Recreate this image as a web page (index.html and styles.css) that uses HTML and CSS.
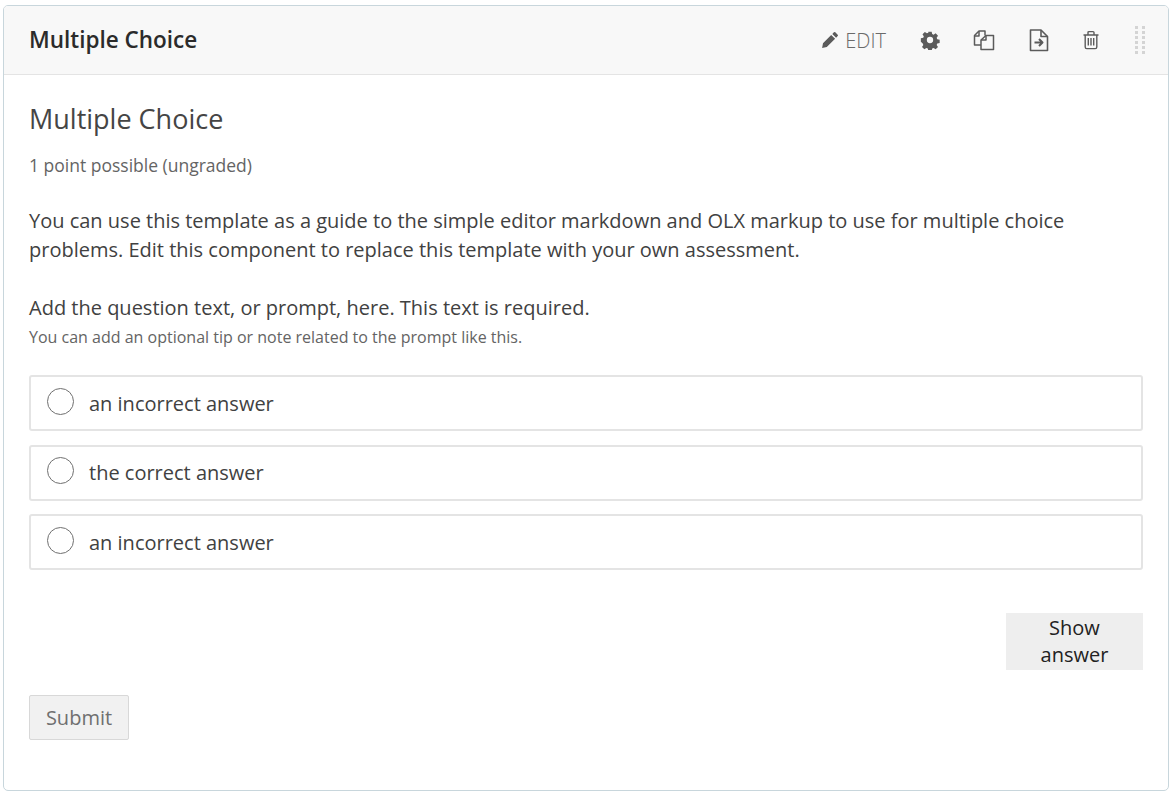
FILE: index.html
```html
<!DOCTYPE html>
<html lang="en">
<head>
<meta charset="utf-8">
<title>Multiple Choice</title>
<link rel="stylesheet" href="styles.css">
</head>
<body>
<div class="card">
  <header class="head">
    <h2 class="head-title">Multiple Choice</h2>
    <div class="actions">
      <span class="edit">
        <svg class="i-pencil" viewBox="0 0 18 18" width="18" height="18"><path d="M12.900 1.300a1 1 0 0 1 1.400 0l2.400 2.400a1 1 0 0 1 0 1.400l-1.600 1.600-3.800-3.800z M10.200 3.900l3.900 3.900-8.300 8.300-4.700 1 .9-4.900z" fill="#5b5b5b"/></svg>
        <span>EDIT</span>
      </span>
      <svg class="i-gear" viewBox="0 0 24 24" width="20" height="20"><path fill="#5b5b5b" fill-rule="evenodd" d="M10 2h4l.6 2.900 1.700.7 2.500-1.600 2.800 2.800-1.600 2.500.7 1.700 2.900.6v4l-2.900.6-.7 1.700 1.600 2.500-2.800 2.800-2.500-1.600-1.700.7-.6 2.900h-4l-.6-2.900-1.700-.7-2.500 1.600-2.800-2.800 1.600-2.500-.7-1.700L1 14v-4l2.900-.6.7-1.700L3 5.200l2.800-2.800 2.500 1.600 1.700-.7zM12 8.200a3.800 3.800 0 1 0 0 7.600 3.800 3.800 0 0 0 0-7.600z"/></svg>
      <svg class="i-copy" viewBox="0 0 22 22" width="22" height="22"><g fill="none" stroke="#5b5b5b" stroke-width="1.500" stroke-linejoin="round"><path d="M8 16H1.500V6.500L6 2h6v4.500"/><path d="M1.500 7H6V2"/><path d="M8 11l5-4.500h7.500V20.500H8z"/><path d="M8 11h5V6.500"/></g></svg>
      <svg class="i-move" viewBox="0 0 20 24" width="20" height="24"><g fill="none" stroke="#5b5b5b" stroke-width="1.600" stroke-linejoin="round"><path d="M1.500 2H12l6.500 6.500V22.500H1.500z"/><path d="M12 2v6.500h6.500"/><path d="M5.500 14.500H13M10 11l3.500 3.500-3.500 3.500" stroke-width="2"/></g></svg>
      <svg class="i-trash" viewBox="0 0 18 20" width="18" height="20"><g fill="none" stroke="#5b5b5b" stroke-width="1.400"><path d="M1.500 5h15"/><path d="M6 5V2.600q0-1 1-1h4q1 0 1 1V5"/><path d="M3.200 5v12q0 1.600 1.600 1.600h8.400q1.600 0 1.600-1.600V5"/><path d="M6.300 8v7.500M9 8v7.500M11.700 8v7.500"/></g></svg>
      <svg class="i-drag" viewBox="0 0 10 30" width="10" height="30"><g fill="#d4d4d4"><rect x="0" y="1" width="3" height="3"/><rect x="7" y="1" width="3" height="3"/><rect x="0" y="6" width="3" height="3"/><rect x="7" y="6" width="3" height="3"/><rect x="0" y="11" width="3" height="3"/><rect x="7" y="11" width="3" height="3"/><rect x="0" y="16" width="3" height="3"/><rect x="7" y="16" width="3" height="3"/><rect x="0" y="21" width="3" height="3"/><rect x="7" y="21" width="3" height="3"/><rect x="0" y="26" width="3" height="3"/><rect x="7" y="26" width="3" height="3"/></g></svg>
    </div>
  </header>
  <main class="body">
    <h3 class="problem-title">Multiple Choice</h3>
    <p class="points">1 point possible (ungraded)</p>
    <p class="intro">You can use this template as a guide to the simple editor markdown and OLX markup to use for multiple choice problems. Edit this component to replace this template with your own assessment.</p>
    <p class="prompt">Add the question text, or prompt, here. This text is required.</p>
    <p class="tip">You can add an optional tip or note related to the prompt like this.</p>
    <div class="options">
      <label class="option"><span class="radio"></span><span>an incorrect answer</span></label>
      <label class="option"><span class="radio"></span><span>the correct answer</span></label>
      <label class="option"><span class="radio"></span><span>an incorrect answer</span></label>
    </div>
    <div class="show-row"><button class="show">Show answer</button></div>
    <button class="submit">Submit</button>
  </main>
</div>
</body>
</html>
```
FILE: styles.css
```css
* { box-sizing: border-box; }
html, body { margin: 0; background: #fff; }
body { padding: 5px 5px 4px 3px; font-family: "Open Sans", sans-serif; color: #414141; }
.card { height: 786px; border: 1px solid #c8d6dc; border-radius: 5px; overflow: hidden; background: #fff; }
.head { height: 69px; display: flex; align-items: center; justify-content: space-between; padding: 0 23px 0 25px; background: #f8f8f8; border-bottom: 1px solid #e4e4e4; }
.head-title { margin: 0 0 2px; font-size: 22.5px; font-weight: 600; color: #2b2b2b; }
.actions { display: flex; align-items: center; }
.edit { display: flex; align-items: center; gap: 6px; font-size: 20px; font-weight: 300; color: #6a6a6a; margin-right: 34px; }
.i-gear { margin-left: 0; }
.i-copy { margin-left: 33px; }
.i-move { margin-left: 34px; }
.i-trash { margin-left: 33px; }
.i-drag { margin-left: 35px; }
.body { padding: 24px 25px 0 25px; }
.problem-title { margin: 0; font-size: 27px; line-height: 40px; font-weight: 400; color: #454545; }
.points { margin: 14px 0 0; font-size: 17.5px; line-height: 24px; color: #646464; }
.intro { margin: 29px 0 0; font-size: 20px; line-height: 29px; color: #414141; }
.prompt { margin: 29px 0 0; font-size: 20px; line-height: 29px; }
.tip { margin: 3px 0 0; font-size: 16px; line-height: 24px; color: #646464; }
.options { margin-top: 26px; display: flex; flex-direction: column; gap: 13.5px; }
.option { height: 56px; display: flex; align-items: center; gap: 15px; padding: 0 16px; border: 2px solid #e4e4e4; border-radius: 3px; font-size: 20px; }
.radio { width: 27px; height: 27px; border: 1px solid #707070; border-radius: 50%; margin-top: -4px; }
.show-row { display: flex; justify-content: flex-end; margin-top: 43px; }
.show { width: 137px; height: 57px; padding: 0 24px 2px; border: 0; background: #eee; font: 20px/27px "Open Sans", sans-serif; color: #222; }
.submit { display: block; margin-top: 25px; width: 100px; height: 45px; border: 1px solid #d8d8d8; border-radius: 2px; background: #f1f1f1; font: 20px "Open Sans", sans-serif; color: #6f6f6f; }
```
